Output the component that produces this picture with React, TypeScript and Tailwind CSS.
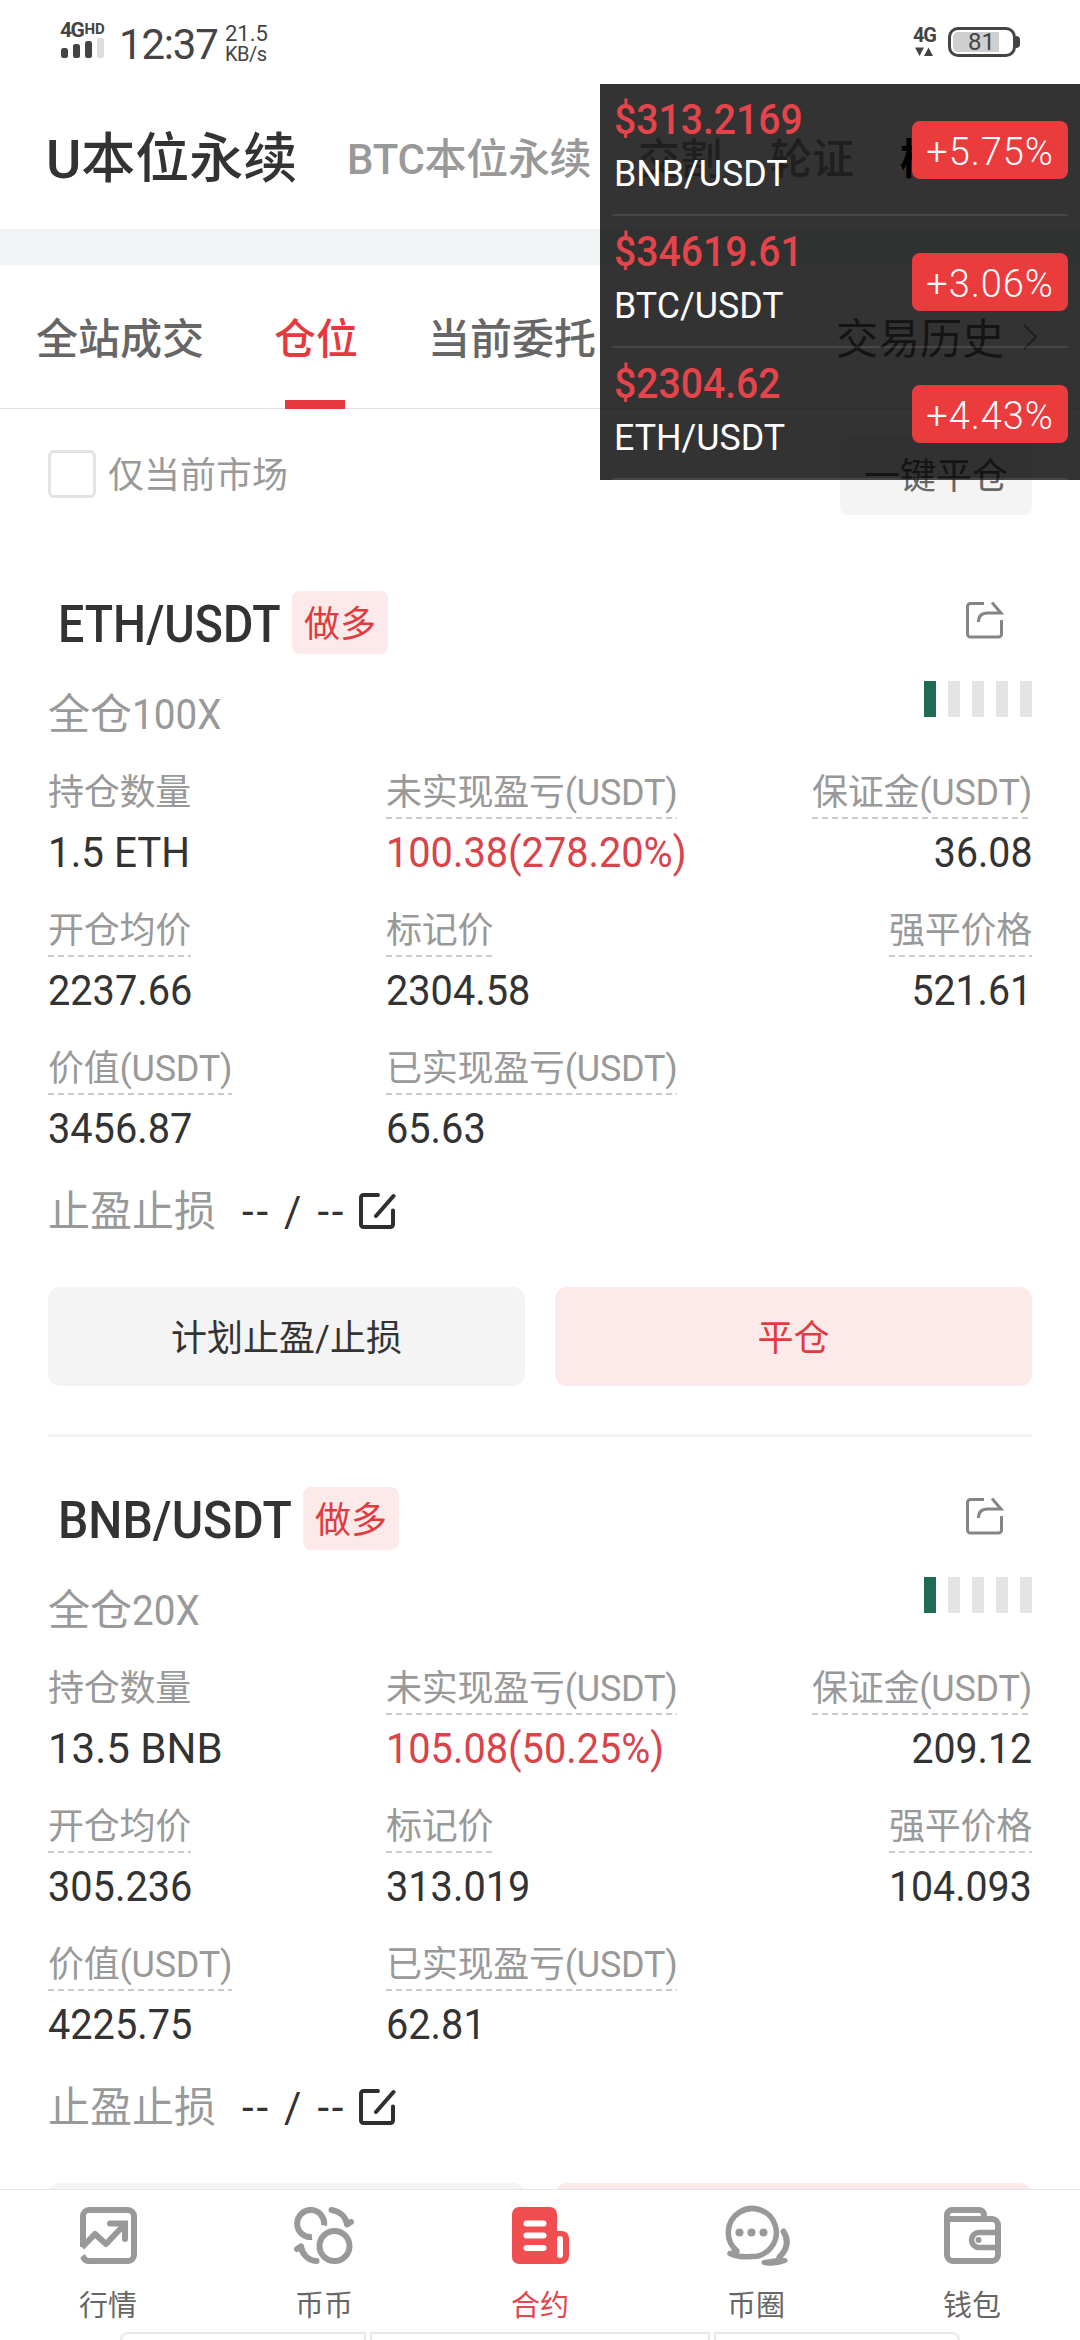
import React from 'react';
import clsx from 'clsx';

const tickers = [
  { price: '$313.2169', pair: 'BNB/USDT', change: '+5.75%' },
  { price: '$34619.61', pair: 'BTC/USDT', change: '+3.06%' },
  { price: '$2304.62', pair: 'ETH/USDT', change: '+4.43%' },
];

const positions = [
  {
    pair: 'ETH/USDT',
    pairClass: 'w-[220px] scale-x-[0.895]',
    leverage: '100X',
    fields: [
      { label: '持仓数量', value: '1.5 ETH', valueClass: 'origin-left scale-x-[0.96]', plain: true },
      { label: '未实现盈亏(USDT)', value: '100.38(278.20%)', red: true },
      { label: '保证金(USDT)', value: '36.08' },
      { label: '开仓均价', value: '2237.66' },
      { label: '标记价', value: '2304.58' },
      { label: '强平价格', value: '521.61' },
      { label: '价值(USDT)', value: '3456.87' },
      { label: '已实现盈亏(USDT)', value: '65.63' },
    ],
  },
  {
    pair: 'BNB/USDT',
    pairClass: 'w-[231px] scale-x-[0.925]',
    leverage: '20X',
    fields: [
      { label: '持仓数量', value: '13.5 BNB', valueClass: 'origin-left', plain: true },
      { label: '未实现盈亏(USDT)', value: '105.08(50.25%)', red: true },
      { label: '保证金(USDT)', value: '209.12' },
      { label: '开仓均价', value: '305.236' },
      { label: '标记价', value: '313.019' },
      { label: '强平价格', value: '104.093' },
      { label: '价值(USDT)', value: '4225.75' },
      { label: '已实现盈亏(USDT)', value: '62.81' },
    ],
  },
];

const ShareIcon = () => (
  <svg width="40" height="40" viewBox="0 0 40 40" fill="none" stroke="#858585" strokeWidth="3">
    <path d="M19 3.500H5.500a3 3 0 0 0-3 3V34a3 3 0 0 0 3 3h28a3 3 0 0 0 3-3V20" />
    <path d="M13.500 22c0-6 3.500-9 9-9H36L27 2.500" />
  </svg>
);

const EditIcon = () => (
  <svg width="38" height="38" viewBox="0 0 38 38" fill="none" stroke="#2f2f2f" strokeWidth="4" strokeLinecap="round">
    <path d="M20 3H5.500a2.500 2.500 0 0 0-2.500 2.500V32.500a2.500 2.500 0 0 0 2.500 2.500H32.500a2.500 2.500 0 0 0 2.500-2.500V18.500" />
    <path d="M18 24L35.500 4" />
  </svg>
);

const MarketIcon = () => (
  <svg width="57" height="57" viewBox="0 0 57 57" fill="none" stroke="#999" strokeWidth="6">
    <path d="M3 40V9a6 6 0 0 1 6-6h39a6 6 0 0 1 6 6v39a6 6 0 0 1-6 6H9c-3.500 0-5.500-2-6.500-6" />
    <path d="M2 40.500L15 27l11 10 18-19" strokeLinejoin="round" />
    <path d="M30 16.500h15V32" strokeLinecap="round" />
    <path d="M-1 50L8 42" stroke="#fff" strokeWidth="3" />
  </svg>
);

const SpotIcon = () => (
  <svg width="60" height="57" viewBox="0 0 60 57" fill="none" stroke="#999" strokeWidth="6">
    <path d="M30 18.500A13.500 13.500 0 1 0 18 30" />
    <circle cx="40.500" cy="39" r="15" />
    <path d="M37.500 3C45 4 51 9 53 16.500" strokeLinecap="round" />
    <path d="M53 17.500L57 15" strokeLinecap="round" />
    <path d="M22.500 54C14 53.500 8 47 7 39.500" strokeLinecap="round" />
    <path d="M7 39.500L3 42" strokeLinecap="round" />
  </svg>
);

const ContractIcon = () => (
  <svg width="57" height="57" viewBox="0 0 57 57">
    <path d="M7 0h31a7 7 0 0 1 7 7v17h5a7 7 0 0 1 7 7v18a8 8 0 0 1-8 8H7a7 7 0 0 1-7-7V7a7 7 0 0 1 7-7z" fill="#f04e50" />
    <path d="M14.500 16.500h17M14.500 28.500h17M14.500 41h17" stroke="#fff" strokeWidth="6" strokeLinecap="round" />
    <rect x="45" y="29" width="6" height="22" rx="3" fill="#fff" />
  </svg>
);

const CircleIcon = () => (
  <svg className="ml-[2px]" width="67" height="61" viewBox="0 0 67 61" fill="none" stroke="#999" strokeWidth="6" strokeLinecap="round">
    <path d="M13 46A24 24 0 1 1 27.500 51.500C19 52.500 10 51 6 48.500C9 48 12 48 13 46z" strokeWidth="5.500" strokeLinejoin="round" />
    <path d="M59.500 26.500c5 8 4.500 17-4 25.500" />
    <path d="M40 57.500c7 1.500 15 .5 21-2h-8z" strokeWidth="5" strokeLinejoin="round" />
    <g fill="#999" stroke="none">
      <circle cx="15.500" cy="27.500" r="4" />
      <circle cx="27.500" cy="27.500" r="4" />
      <circle cx="39.500" cy="27.500" r="4" />
    </g>
  </svg>
);

const WalletIcon = () => (
  <svg width="57" height="57" viewBox="0 0 57 57" fill="none" stroke="#999" strokeWidth="6">
    <path d="M3 12h45a6 6 0 0 1 6 6v30a6 6 0 0 1-6 6H9a6 6 0 0 1-6-6V8a5 5 0 0 1 5-5h27a5 5 0 0 1 5 5v3" />
    <path d="M54 25.500H35a7.500 7.500 0 0 0 0 15h19" strokeWidth="5.500" />
    <circle cx="34.500" cy="33" r="3" fill="#999" stroke="none" />
  </svg>
);

const navItems = [
  { label: '行情', icon: <MarketIcon /> },
  { label: '币币', icon: <SpotIcon /> },
  { label: '合约', icon: <ContractIcon />, active: true },
  { label: '币圈', icon: <CircleIcon /> },
  { label: '钱包', icon: <WalletIcon /> },
];

const StatusBar = () => (
  <div className="flex h-[84px] shrink-0 items-start justify-between pr-[60px] pl-[60px] text-[#444]">
    <div className="flex">
      <div className="w-[59px] pt-[20px]">
        <div className="flex font-bold">
          <span className="text-[21px] leading-[21px] tracking-[-1.5px]">4G</span>
          <span className="ml-[1px] text-[15px] leading-[18px]">HD</span>
        </div>
        <svg className="mt-[-4px]" width="44" height="21" viewBox="0 0 44 21">
          <rect x="1" y="11" width="7" height="10" rx="2.500" fill="#444" />
          <rect x="13" y="7" width="7" height="14" rx="2.500" fill="#444" />
          <rect x="25" y="4" width="7" height="17" rx="2.500" fill="#444" />
          <rect x="37" y="1" width="7" height="20" rx="2.500" fill="#ddd" />
        </svg>
      </div>
      <span className="w-[106px] pt-[24px] text-[42px] leading-[41px] tracking-[-1.2px]">12:37</span>
      <div className="pt-[24px] text-[20px] leading-[20px]">
        <div className="text-[22px]">21.5</div>
        <div className="tracking-[-0.5px]">KB/s</div>
      </div>
    </div>
    <div className="flex gap-3">
      <div className="flex flex-col items-center pt-[25px]">
        <span className="text-[20px] leading-[20px] font-bold tracking-[-1px]">4G</span>
        <svg className="mt-[2px]" width="18" height="10" viewBox="0 0 18 10" fill="#444">
          <path d="M0 0.500h9L4.500 9zM9 9h9L13.500 0.500z" />
        </svg>
      </div>
      <div className="mt-[27px] flex items-center">
        <div className="flex h-[30px] w-[68px] rounded-[10px] border-[3px] border-[#444] p-[2px]">
          <div className="flex h-full w-[46px] items-center justify-end rounded-l-[5px] bg-[#cfcfcf] pr-[4px] text-[24px]">81</div>
        </div>
        <div className="h-3 w-1 rounded-r-sm bg-[#444]" />
      </div>
    </div>
  </div>
);

const TickerOverlay = () => (
  <div className="absolute top-[84px] right-0 h-[396px] w-[480px] overflow-hidden bg-black/80 px-3">
    {tickers.map((t) => (
      <div key={t.pair} className="flex h-[132px] justify-between border-b-2 border-white/10">
        <div className="pt-[11px] pl-[2px]">
          <div className="origin-left scale-x-[0.91] text-[43px] leading-[48px] font-medium text-[#e5444b]">{t.price}</div>
          <div className="mt-[6px] origin-left scale-x-[0.98] text-[36.500px] leading-[50px] text-white">{t.pair}</div>
        </div>
        <div className="mt-[37px] flex h-[58px] w-[156px] items-center justify-center rounded-lg bg-[#ea3b3d] pt-[5px] text-[38px] font-light tracking-[0.9px] text-white">
          {t.change}
        </div>
      </div>
    ))}
  </div>
);

const PositionCard = ({ position }: { position: (typeof positions)[number] }) => (
  <div className="mx-12 h-[896px] shrink-0 border-b-[3px] border-[#f3f3f3] pt-[50px]">
    <div className="flex h-[63px] items-center justify-between pr-[27px] pl-[10px]">
      <div className="flex items-center">
        <span className={clsx('origin-left pt-1 text-[52px] leading-[63px] font-medium whitespace-nowrap text-[#333]', position.pairClass)}>
          {position.pair}
        </span>
        <span className="ml-[14px] flex h-[63px] w-24 items-center justify-center rounded-lg bg-[#fceaea] pt-1 text-[36px] text-[#e03c40]">做多</span>
      </div>
      <div className="mb-[6px]"><ShareIcon /></div>
    </div>
    <div className="flex h-[114px] items-start justify-between">
      <div className="flex pt-[31px] text-[42px] leading-[60px] text-[#999]">
        <span>全仓</span>
        <span className="origin-left scale-x-[0.92]">{position.leverage}</span>
      </div>
      <div className="mt-[27px] flex gap-3">
        {[0, 1, 2, 3, 4].map((i) => (
          <div key={i} className={clsx('h-9 w-3', i === 0 ? 'bg-[#206a56]' : 'bg-[#e4e4e4]')} />
        ))}
      </div>
    </div>
    <div className="grid grid-cols-[338px_1fr_auto]">
      {position.fields.map((f, i) => (
        <div key={f.label} className={clsx('flex h-[138px] flex-col', i % 3 === 2 ? 'items-end' : 'items-start')}>
          <div
            className={clsx(
              'h-[51px] text-[36px] leading-[51px] tracking-[-0.25px] whitespace-nowrap text-[#999]',
              !f.plain && 'bg-[repeating-linear-gradient(90deg,#ccc_0_6px,transparent_6px_10px)] bg-[length:100%_2px] bg-bottom bg-no-repeat',
            )}
          >
            {f.label}
          </div>
          <div
            className={clsx(
              'mt-[4px] text-[42px] leading-[60px] whitespace-nowrap',
              f.valueClass ?? (i % 3 === 2 ? 'origin-right scale-x-[0.935]' : 'origin-left scale-x-[0.945]'),
              f.red ? 'text-[#d9434a]' : 'text-[#333]',
            )}
          >
            {f.value}
          </div>
        </div>
      ))}
    </div>
    <div className="flex h-[60px] items-center text-[42px] leading-[60px]">
      <span className="text-[#999]">止盈止损</span>
      <span className="ml-[26px] w-[116px] tracking-[2.800px] whitespace-nowrap text-[#333]">-- / --</span>
      <div className="mb-[3px]"><EditIcon /></div>
    </div>
    <div className="mt-[45px] grid grid-cols-2 gap-[30px] text-[36px]">
      <button className="h-[99px] rounded-xl bg-[#f4f4f4] pt-1 text-[#333]">计划止盈/止损</button>
      <button className="h-[99px] rounded-xl bg-[#fceaea] pt-1 text-[#e03c40]">平仓</button>
    </div>
  </div>
);

const BottomNav = () => (
  <div className="absolute bottom-0 left-0 h-[151px] w-full border-t border-[#e6e6e6] bg-white">
    <div className="grid grid-cols-5">
      {navItems.map((item) => (
        <div key={item.label} className="flex flex-col items-center pt-[15px]">
          <div className="flex h-[61px] items-center">{item.icon}</div>
          <span className={clsx('mt-[18px] text-[29px] leading-[44px]', item.active ? 'text-[#e0484d]' : 'text-[#666]')}>{item.label}</span>
        </div>
      ))}
    </div>
    <div className="absolute bottom-0 left-[120px] flex h-2 gap-1">
      <div className="w-[246px] rounded-tl-lg border-2 border-b-0 border-[#e8e8e8]" />
      <div className="w-[340px] border-2 border-b-0 border-[#e8e8e8]" />
      <div className="w-[246px] rounded-tr-lg border-2 border-b-0 border-[#e8e8e8]" />
    </div>
  </div>
);

export default function App() {
  return (
    <div className="relative flex h-[2340px] w-[1080px] flex-col overflow-hidden bg-white font-['Roboto','Noto_Sans_CJK_SC',sans-serif]">
      <StatusBar />

      {/* Contract type */}
      <div className="flex h-[145px] shrink-0 items-center pt-[6px] pl-[46px] font-medium whitespace-nowrap text-[#999]">
        <span className="w-[301px] text-[54px] text-[#333]">U本位永续</span>
        <span className="w-[291px] text-[42px] tracking-[-0.3px]">BTC本位永续</span>
        <span className="w-[132px] text-[42px]">交割</span>
        <span className="w-[130px] text-[42px]">轮证</span>
        <span className="text-[42px] font-bold text-black">模拟</span>
      </div>
      <div className="h-9 shrink-0 bg-[#f1f3f5]" />

      {/* Order tabs */}
      <div className="flex h-36 shrink-0 border-b border-[#e3e3e3] pr-[40px] pl-9 text-[42px] leading-[149px] text-[#666]">
        <div className="flex gap-[70px] font-medium">
          <span>全站成交</span>
          <span className="relative h-36 text-[#e5393d]">
            仓位
            <span className="absolute bottom-0 left-[11px] h-[9px] w-[60px] bg-[#e5393d]" />
          </span>
          <span>当前委托</span>
        </div>
        <span className="ml-auto">交易历史</span>
        <svg className="mt-[59px] ml-[16px]" width="20" height="26" viewBox="0 0 20 26" fill="none" stroke="#999" strokeWidth="2">
          <path d="M4 1l12 12L4 25" />
        </svg>
      </div>

      {/* Filter */}
      <div className="flex h-[132px] shrink-0 items-start justify-between pr-12 pl-12 text-[36px]">
        <label className="mt-[41px] flex h-12 items-center gap-3 text-[#999]">
          <span className="h-12 w-12 rounded-md border-[3px] border-[#e3e3e3]" />
          <span className="pt-1">仅当前市场</span>
        </label>
        <button className="mt-[27px] h-[79px] w-48 rounded-lg bg-[#f4f4f4] pt-[3px] text-[#666]">一键平仓</button>
      </div>

      {positions.map((p) => (
        <PositionCard key={p.pair} position={p} />
      ))}

      <TickerOverlay />
      <BottomNav />
    </div>
  );
}
